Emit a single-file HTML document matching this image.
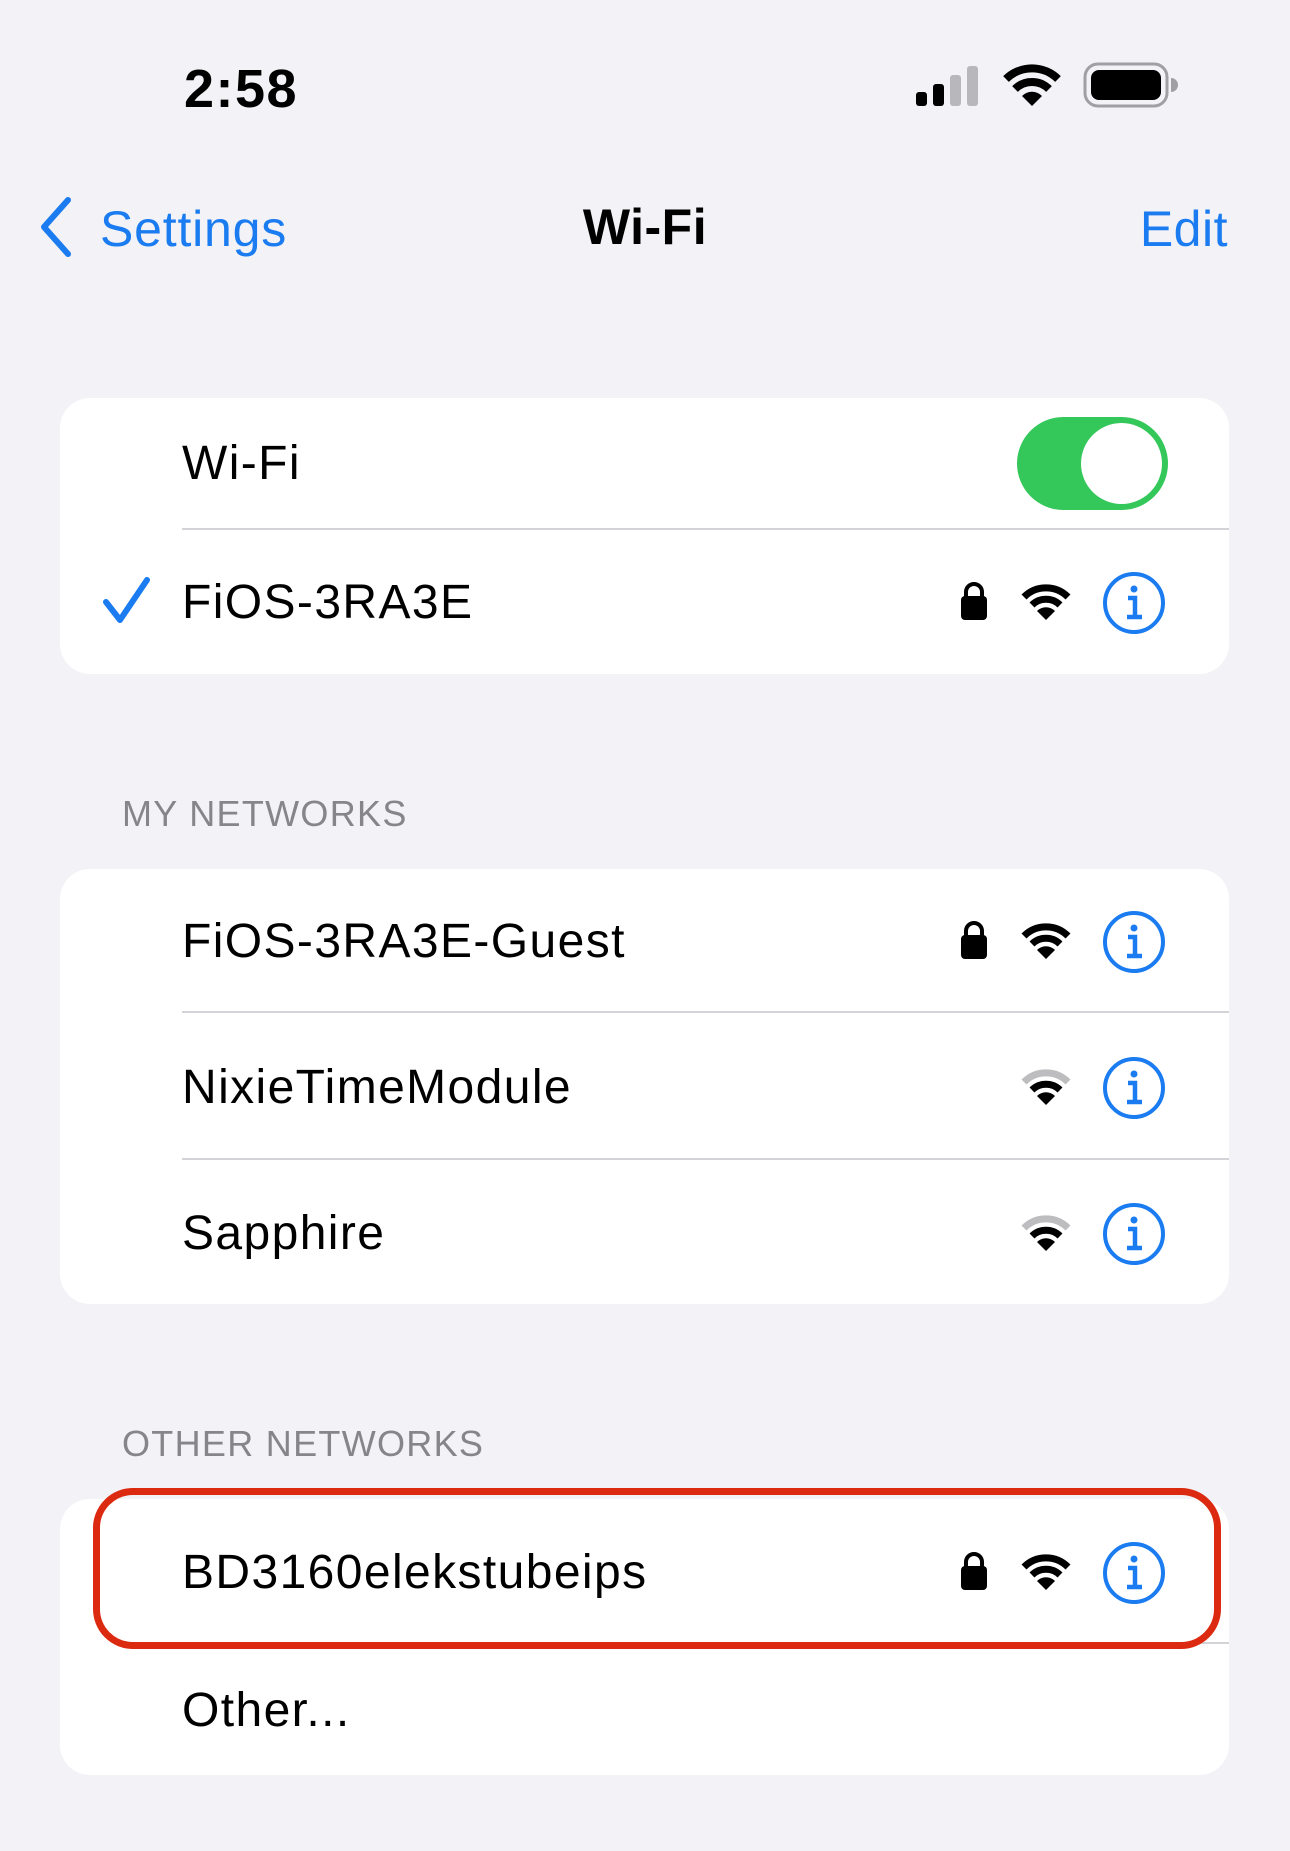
<!DOCTYPE html>
<html><head><meta charset="utf-8"><style>
*{margin:0;padding:0;box-sizing:border-box}
body{width:1290px;height:1851px;background:#f2f2f7;position:relative;overflow:hidden;font-family:"Liberation Sans",sans-serif;color:#000}
.a{position:absolute}
.card{position:absolute;left:60px;width:1169px;background:#fff;border-radius:30px}
.t{position:absolute;left:182px;font-size:48px;line-height:1;transform:translateY(-50%);letter-spacing:1.4px}
.div{position:absolute;left:182px;right:0;height:2px;background:#d4d4d8}
.hdr{position:absolute;left:122px;font-size:36px;color:#85858a;transform:translateY(-50%);letter-spacing:1.3px}
.ic{position:absolute;transform:translateY(-50%)}
</style></head><body>
<div class="a" style="left:184px;top:58px;font-size:54px;font-weight:bold;letter-spacing:1.5px">2:58</div>
<svg class="a" style="left:914px;top:64px" width="68" height="44" viewBox="0 0 68 44">
<rect x="2" y="28" width="11" height="14" rx="3" fill="#000"/>
<rect x="19" y="20" width="11" height="22" rx="3" fill="#000"/>
<rect x="36" y="11" width="11" height="31" rx="3" fill="#b8b8bc"/>
<rect x="53" y="2" width="11" height="40" rx="3" fill="#b8b8bc"/>
</svg>
<svg class="a" style="left:1002px;top:62px" width="60" height="46" viewBox="0 0 60 46">
<path d="M30 44 L20 34 A14 14 0 0 1 40 34 Z" fill="#000"/>
<path d="M13 27 A24 24 0 0 1 47 27" stroke="#000" stroke-width="8" fill="none"/>
<path d="M4 17 A37 37 0 0 1 56 17" stroke="#000" stroke-width="8" fill="none"/>
</svg>
<svg class="a" style="left:1083px;top:62px" width="96" height="46" viewBox="0 0 96 46">
<rect x="2" y="2" width="82" height="42" rx="13" fill="none" stroke="#a0a0a4" stroke-width="3"/>
<rect x="8" y="8" width="70" height="30" rx="8" fill="#000"/>
<path d="M88 16 A6 6 0 0 1 88 30 Z" fill="#a0a0a4"/>
</svg>
<svg class="a" style="left:36px;top:196px" width="40" height="62" viewBox="0 0 40 62"><path d="M32 4 L8 31 L32 58" stroke="#1a7cf0" stroke-width="6" fill="none" stroke-linecap="round" stroke-linejoin="round"/></svg>
<div class="a" style="left:100px;top:200px;font-size:50px;color:#1a7cf0;letter-spacing:0.8px">Settings</div>
<div class="a" style="left:0;width:1290px;text-align:center;top:198px;font-size:50px;font-weight:bold;letter-spacing:0.5px">Wi-Fi</div>
<div class="a" style="right:62px;top:200px;font-size:50px;color:#1a7cf0;letter-spacing:0.5px">Edit</div>

<div class="card" style="top:398px;height:276px">
 <div class="t" style="left:122px;top:66px">Wi-Fi</div>
 <div class="a" style="left:957px;top:19px;width:151px;height:93px;border-radius:47px;background:#34c759"><div class="a" style="right:6px;top:6px;width:81px;height:81px;border-radius:50%;background:#fff"></div></div>
 <div class="div" style="left:122px;top:130px"></div>
 <svg class="a" style="left:42px;top:178px" width="50" height="50" viewBox="0 0 50 50"><path d="M4 26 L18 44 L45 4" stroke="#1a7cf0" stroke-width="6" fill="none" stroke-linecap="round" stroke-linejoin="round"/></svg>
 <div class="t" style="left:122px;top:205px">FiOS-3RA3E</div>
</div>

<div class="hdr" style="top:814px">MY NETWORKS</div>
<div class="card" style="top:869px;height:435px"></div>
<div class="div" style="top:1011px;left:182px;right:61px"></div>
<div class="div" style="top:1158px;left:182px;right:61px"></div>
<div class="t" style="top:942px">FiOS-3RA3E-Guest</div>
<div class="t" style="top:1088px">NixieTimeModule</div>
<div class="t" style="top:1234px">Sapphire</div>

<div class="hdr" style="top:1444px">OTHER NETWORKS</div>
<div class="card" style="top:1499px;height:276px"></div>
<div class="div" style="top:1642px;left:182px;right:61px"></div>
<div class="t" style="top:1573px">BD3160elekstubeips</div>
<div class="t" style="top:1711px">Other...</div>
<div class="a" style="left:93px;top:1488px;width:1128px;height:161px;border:7px solid #dc2a10;border-radius:40px"></div>

<svg width="0" height="0" style="position:absolute"><defs>
<g id="lk"><path d="M7 16 V11 A8 8 0 0 1 23 11 V16" stroke="#000" stroke-width="4" fill="none"/><rect x="2" y="15" width="26" height="24" rx="4" fill="#000"/></g>
<g id="wf"><path d="M25 39 L16 30 A12.7 12.7 0 0 1 34 30 Z" fill="#000"/><path d="M11 24 A20 20 0 0 1 39 24" stroke="#000" stroke-width="7" fill="none"/><path d="M3 16 A31 31 0 0 1 47 16" stroke="#000" stroke-width="7" fill="none"/></g>
<g id="wf2"><path d="M25 39 L16 30 A12.7 12.7 0 0 1 34 30 Z" fill="#000"/><path d="M11 24 A20 20 0 0 1 39 24" stroke="#000" stroke-width="7" fill="none"/><path d="M3 16 A31 31 0 0 1 47 16" stroke="#bdbdc0" stroke-width="7" fill="none"/></g>
<g id="in"><circle cx="32" cy="32" r="29" stroke="#1a7cf0" stroke-width="4" fill="none"/><circle cx="32" cy="18" r="3.5" fill="#1a7cf0"/><path d="M26 27 H33 V45 M25 46 H40" stroke="#1a7cf0" stroke-width="4.5" fill="none"/></g>
</defs></svg>
<svg class="ic" style="left:959px;top:601px" width="30" height="40"><use href="#lk"/></svg>
<svg class="ic" style="left:1021px;top:601px" width="50" height="40"><use href="#wf"/></svg>
<svg class="ic" style="left:1102px;top:603px" width="64" height="64"><use href="#in"/></svg>

<svg class="ic" style="left:959px;top:940px" width="30" height="40"><use href="#lk"/></svg>
<svg class="ic" style="left:1021px;top:940px" width="50" height="40"><use href="#wf"/></svg>
<svg class="ic" style="left:1102px;top:942px" width="64" height="64"><use href="#in"/></svg>

<svg class="ic" style="left:1021px;top:1086px" width="50" height="40"><use href="#wf2"/></svg>
<svg class="ic" style="left:1102px;top:1088px" width="64" height="64"><use href="#in"/></svg>

<svg class="ic" style="left:1021px;top:1232px" width="50" height="40"><use href="#wf2"/></svg>
<svg class="ic" style="left:1102px;top:1234px" width="64" height="64"><use href="#in"/></svg>

<svg class="ic" style="left:959px;top:1571px" width="30" height="40"><use href="#lk"/></svg>
<svg class="ic" style="left:1021px;top:1571px" width="50" height="40"><use href="#wf"/></svg>
<svg class="ic" style="left:1102px;top:1573px" width="64" height="64"><use href="#in"/></svg>
</body></html>
